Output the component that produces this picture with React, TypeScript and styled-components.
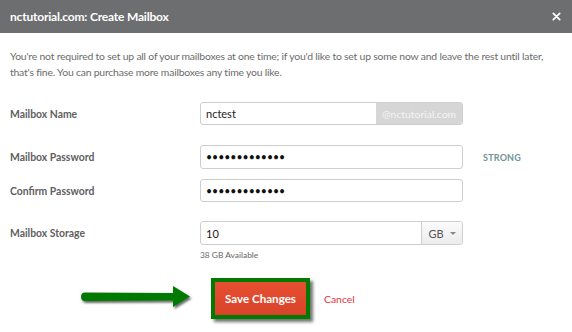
import React from "react";
import styled, { createGlobalStyle } from "styled-components";

const GlobalStyle = createGlobalStyle`
  html, body {
    margin: 0;
    padding: 0;
    background: #ffffff;
  }
  body {
    font-family: Lato, "Open Sans", "Liberation Sans", sans-serif;
  }
`;

const Dialog = styled.div`
  width: 572px;
  height: 332px;
  background: #fff;
  overflow: hidden;
`;

const Header = styled.div`
  height: 33px;
  background: #6d6e70;
  display: flex;
  align-items: center;
  justify-content: space-between;
  padding: 0 11px 0 10px;
  box-sizing: border-box;
`;

const Title = styled.h1`
  margin: 0;
  font-size: 12px;
  font-weight: 700;
  color: #fff;
  letter-spacing: -0.2px;
`;

const Close = styled.button`
  border: 0;
  background: none;
  padding: 0;
  width: 9px;
  height: 9px;
  display: flex;
  cursor: pointer;
`;

const Body = styled.div`
  padding: 16px 10px 0;
`;

const Intro = styled.p`
  margin: 0;
  font-size: 10.4px;
  letter-spacing: -0.2px;
  line-height: 15.5px;
  color: #6b6b6b;
`;

const Row = styled.div<{ $top: number }>`
  display: grid;
  grid-template-columns: 190px 263px auto;
  align-items: start;
  margin-top: ${({ $top }) => $top}px;
`;

const Label = styled.label<{ $h: number }>`
  height: ${({ $h }) => $h}px;
  display: flex;
  align-items: center;
  font-size: 10.4px;
  font-weight: 700;
  color: #606060;
`;

const Group = styled.div<{ $h: number }>`
  display: flex;
  height: ${({ $h }) => $h}px;
  border: 1px solid #cfcfcf;
  border-radius: 3px;
  box-sizing: border-box;
  overflow: hidden;
  background: #fff;
`;

const Field = styled.input`
  flex: 1;
  min-width: 0;
  border: 0;
  outline: none;
  padding: 0 5px;
  font-family: inherit;
  font-size: 11px;
  color: #222;
  background: transparent;
  &[type="password"] {
    font-size: 10.5px;
    letter-spacing: 0;
    color: #111;
  }
`;

const Suffix = styled.span`
  width: 86px;
  background: #d6d6d6;
  color: #f4f4f4;
  font-size: 10.4px;
  display: flex;
  align-items: center;
  justify-content: center;
`;

const Unit = styled.span`
  width: 40px;
  border-left: 1px solid #cfcfcf;
  background: linear-gradient(#fbfbfb, #ececec);
  color: #555;
  font-size: 11px;
  display: flex;
  align-items: center;
  justify-content: center;
  gap: 6px;
`;

const Caret = styled.span`
  width: 0;
  height: 0;
  border-left: 3px solid transparent;
  border-right: 3px solid transparent;
  border-top: 3px solid #888;
`;

const Strength = styled.span`
  height: 24px;
  margin-left: 20px;
  display: flex;
  align-items: center;
  font-size: 9px;
  font-weight: 700;
  color: #6f9396;
  letter-spacing: 0.2px;
`;

const Hint = styled.div`
  margin-top: 5px;
  font-size: 8.4px;
  color: #666;
`;

const Footer = styled.div`
  display: flex;
  align-items: center;
  padding-left: 80px;
  margin-top: 18px;
`;

const Arrow = styled.svg`
  width: 114px;
  height: 28px;
  margin-right: 17px;
  margin-top: -4px;
`;

const SaveButton = styled.button`
  width: 99px;
  height: 41px;
  border: 4px solid #027a02;
  background: linear-gradient(#e74f31, #d8432a);
  box-shadow: 3px 3px 3px rgba(0, 0, 0, 0.55);
  color: #fff;
  font-family: inherit;
  font-size: 11.6px;
  font-weight: 700;
  padding: 0;
  cursor: pointer;
`;

const Cancel = styled.a`
  margin-left: 14px;
  font-size: 10.4px;
  color: #e2353d;
  text-decoration: none;
  cursor: pointer;
`;

export default function App() {
  return (
    <>
      <GlobalStyle />
      <Dialog>
        <Header>
          <Title>nctutorial.com: Create Mailbox</Title>
          <Close aria-label="Close">
            <svg width="9" height="9" viewBox="0 0 9 9">
              <path d="M1.3 1.3 L7.7 7.7 M7.7 1.3 L1.3 7.7" stroke="#fff" strokeWidth="1.7" strokeLinecap="round" />
            </svg>
          </Close>
        </Header>
        <Body>
          <Intro>
            You're not required to set up all of your mailboxes at one time; if you'd like to set up some now and leave the rest until later, that's fine. You can purchase more mailboxes any time you like.
          </Intro>

          <Row $top={22}>
            <Label $h={23}>Mailbox Name</Label>
            <Group $h={23}>
              <Field type="text" defaultValue="nctest" readOnly />
              <Suffix>@nctutorial.com</Suffix>
            </Group>
          </Row>

          <Row $top={20}>
            <Label $h={24}>Mailbox Password</Label>
            <Group $h={24}>
              <Field type="password" defaultValue="abcdefghijklm" readOnly />
            </Group>
            <Strength>STRONG</Strength>
          </Row>

          <Row $top={10}>
            <Label $h={23}>Confirm Password</Label>
            <Group $h={23}>
              <Field type="password" defaultValue="abcdefghijklm" readOnly />
            </Group>
          </Row>

          <Row $top={19}>
            <Label $h={24}>Mailbox Storage</Label>
            <div>
              <Group $h={24}>
                <Field type="text" defaultValue="10" readOnly />
                <Unit>
                  GB <Caret />
                </Unit>
              </Group>
              <Hint>38 GB Available</Hint>
            </div>
          </Row>
        </Body>

        <Footer>
          <Arrow viewBox="0 0 114 28">
            <defs>
              <filter id="sh" x="-10%" y="-30%" width="130%" height="170%">
                <feDropShadow dx="1.5" dy="2" stdDeviation="1.2" floodColor="#000" floodOpacity="0.6" />
              </filter>
            </defs>
            <path
              d="M5 9.5 L93 10 L93 3 L110 13.5 L93 24 L93 17.5 L5 18 Q1 18 1 13.75 Q1 9.5 5 9.5 Z"
              fill="#037a03"
              filter="url(#sh)"
            />
          </Arrow>
          <SaveButton>Save Changes</SaveButton>
          <Cancel>Cancel</Cancel>
        </Footer>
      </Dialog>
    </>
  );
}
